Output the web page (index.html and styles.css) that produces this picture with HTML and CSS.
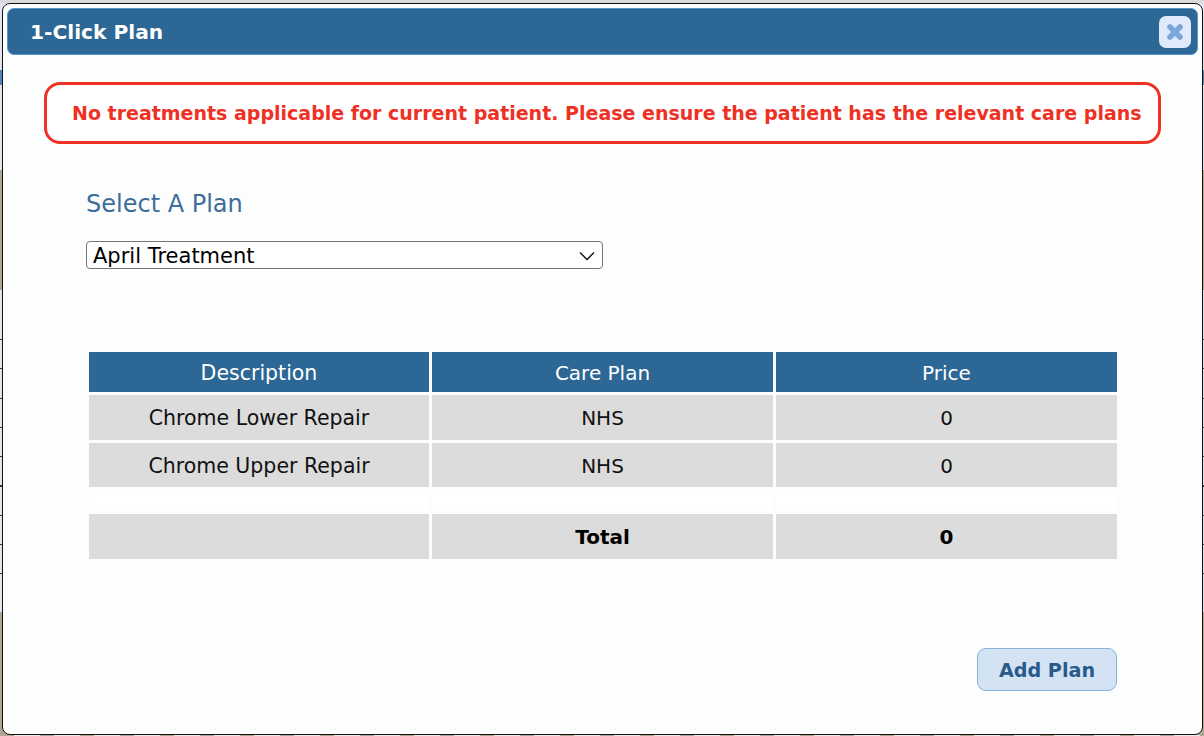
FILE: index.html
```html
<!DOCTYPE html>
<html lang="en">
<head>
    <meta charset="UTF-8">
    <meta name="viewport" content="width=device-width, initial-scale=1.0">
    <title>1-Click Plan</title>
    <link rel="stylesheet" href="styles.css">
</head>
<body>
    <div class="dialog">
        <div class="dialog-title">
            <span>1-Click Plan</span>
            <button class="close-btn" aria-label="Close">
                <svg width="18" height="18" viewBox="0 0 18 18"><path d="M4 4 L14 14 M14 4 L4 14" stroke="#7ba6d8" stroke-width="5.5" stroke-linecap="round"/></svg>
            </button>
        </div>

        <div class="alert">No treatments applicable for current patient. Please ensure the patient has the relevant care plans</div>

        <div class="plan-form">
            <h2 class="plan-heading">Select A Plan</h2>
            <div class="plan-select">
                <span>April Treatment</span>
                <svg width="16" height="10" viewBox="0 0 16 10"><path d="M1 1.5 L8 8.5 L15 1.5" fill="none" stroke="#111" stroke-width="1.4"/></svg>
            </div>
        </div>

        <table class="plan-table">
            <thead>
                <tr><th>Description</th><th>Care Plan</th><th>Price</th></tr>
            </thead>
            <tbody>
                <tr><td>Chrome Lower Repair</td><td>NHS</td><td>0</td></tr>
                <tr class="short"><td>Chrome Upper Repair</td><td>NHS</td><td>0</td></tr>
                <tr class="blank"><td></td><td></td><td></td></tr>
                <tr class="total"><td></td><td>Total</td><td>0</td></tr>
            </tbody>
        </table>

        <div class="actions">
            <button class="add-btn">Add Plan</button>
        </div>
    </div>
</body>
</html>
```

FILE: styles.css
```css
* { box-sizing: border-box; }
html, body { height: 100%; }
body {
    margin: 0;
    padding: 3px 1px 1px 2px;
    overflow: hidden;
    font-family: "DejaVu Sans", sans-serif;
    /* bits of the page behind the dialog that show round its edge */
    background:
        linear-gradient(#d9d9d9, #d9d9d9) top / 100% 3px no-repeat,
        repeating-linear-gradient(90deg, #b0a694 0 14px, #eceaf0 14px 40px) bottom / 100% 1px no-repeat,
        linear-gradient(#b0a694, #b0a694) 0 612px / 100% 124px no-repeat,
        repeating-linear-gradient(#333 0 1px, transparent 1px 29.3px) 0 339px / 100% 264px no-repeat,
        linear-gradient(#4f86b5, #4f86b5) 0 70px / 100% 15px no-repeat,
        linear-gradient(#b0a694, #b0a694) 0 170px / 100% 120px no-repeat,
        #e4e4f0;
}
.dialog {
    height: 732px;
    display: flex;
    flex-direction: column;
    padding: 4px;
    background: #fcfefe;
    border: 1px solid #111;
    border-radius: 8px;
}
.dialog-title {
    display: flex;
    align-items: center;
    justify-content: space-between;
    height: 47px;
    padding: 0 6px 0 22px;
    color: #fff;
    font-size: 20.2px;
    font-weight: bold;
    background: #2c6795;
    border: 1px solid #5b95cb;
    border-radius: 7px;
}
.dialog-title span { padding-top: 1px; }
.close-btn {
    display: flex;
    align-items: center;
    justify-content: center;
    width: 32px;
    height: 32px;
    padding: 0;
    background: #dfeafa;
    border: 0;
    border-radius: 7px;
}
.alert {
    display: flex;
    align-items: center;
    height: 62px;
    margin: 27px 37px 0 37px;
    padding-left: 25px;
    color: #ee3124;
    font-size: 19px;
    font-weight: bold;
    background: #fff;
    border: 3px solid #ee3124;
    border-radius: 16px;
    white-space: nowrap;
}
.plan-form { margin: 0 0 0 79px; }
.plan-heading {
    margin: 45px 0 0 0;
    color: #3d6d9a;
    font-size: 24px;
    font-weight: normal;
    line-height: 30px;
}
.plan-select {
    display: flex;
    align-items: center;
    justify-content: space-between;
    width: 517px;
    height: 28px;
    margin-top: 22px;
    padding: 1px 7px 0 6px;
    color: #000;
    font-size: 21px;
    background: #fff;
    border: 1px solid #767676;
    border-radius: 4px;
}
.plan-table {
    width: 1034px;
    margin: 80px 0 0 79px;
    border-spacing: 3px;
    table-layout: fixed;
    font-size: 20px;
}
.plan-table th {
    height: 40px;
    padding: 1px 0 0 0;
    color: #fff;
    font-weight: normal;
    background: #2c6795;
}
.plan-table th:first-child { width: 340px; }
.plan-table td {
    height: 45px;
    padding: 0;
    text-align: center;
    color: #111;
    background: #dcdcdc;
}
.plan-table th:first-child,
.plan-table td:first-child { font-size: 20.5px; }
.plan-table .short td { height: 44px; padding-top: 1px; }
.plan-table .blank td { height: 21px; background: #fff; }
.plan-table .total td { font-weight: bold; color: #000; }
.actions {
    display: flex;
    justify-content: flex-end;
    margin: 86px 81px 0 0;
}
.add-btn {
    width: 140px;
    height: 43px;
    padding: 2px 0 0 0;
    color: #2a5a8c;
    font-family: inherit;
    font-size: 19.2px;
    font-weight: bold;
    background: #d3e3f4;
    border: 1px solid #84b3e0;
    border-radius: 9px;
}
```
